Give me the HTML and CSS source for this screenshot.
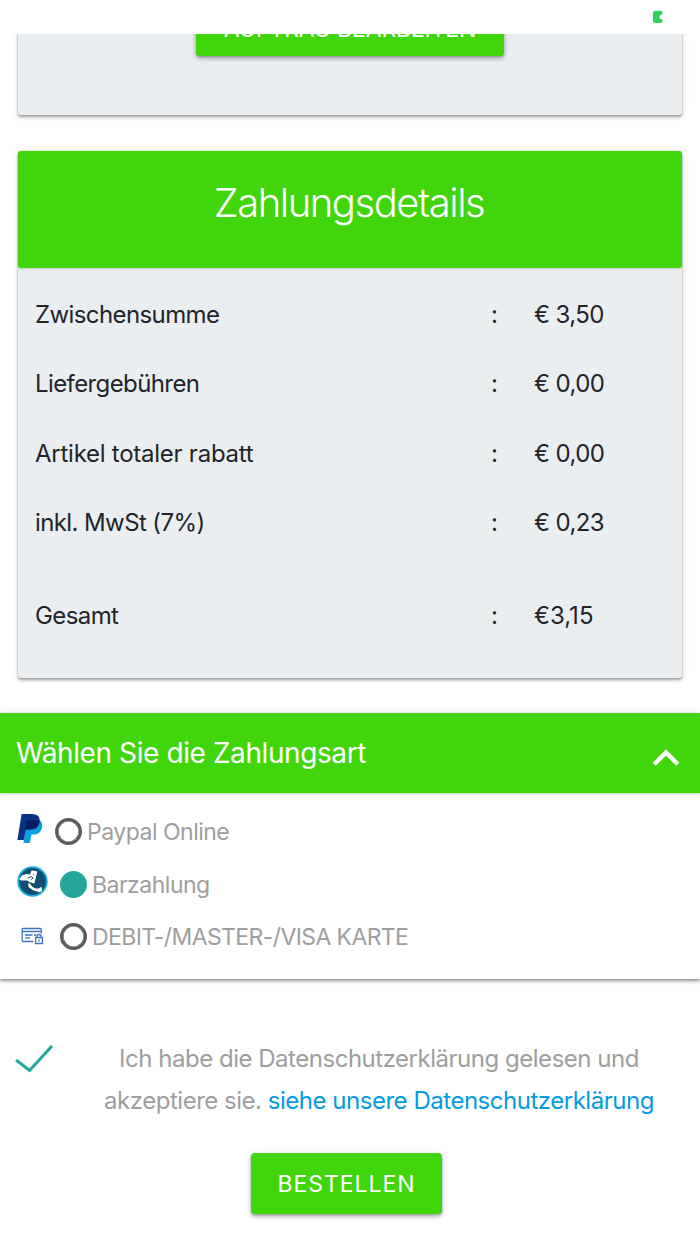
FILE: index.html
```html
<!DOCTYPE html>
<html lang="de">
<head>
<meta charset="utf-8">
<meta name="viewport" content="width=device-width, initial-scale=1">
<title>Zahlungsdetails</title>
<link rel="stylesheet" href="styles.css">
</head>
<body>
<header class="status-bar">
  <svg class="battery" width="10" height="14" viewBox="0 0 10 14"><path d="M2.5 .7H7.4Q9.5 .7 9.5 2.8V4.3Q6.4 4.9 6.4 7T9.5 9.7V10.9Q9.5 13 7.4 13H2.5Q0 13 0 10.3V3.2Q0 .7 2.5 .7Z" fill="#30d158"/></svg>
</header>
<main>
  <section class="card order-card">
    <button class="btn edit-btn"><span>AUFTRAG BEARBEITEN</span></button>
  </section>

  <section class="card details">
    <h1 class="details-title"><span>Zahlungsdetails</span></h1>
    <dl class="totals">
      <div class="row"><dt>Zwischensumme</dt><dd>:</dd><dd>€ 3,50</dd></div>
      <div class="row"><dt>Liefergebühren</dt><dd>:</dd><dd>€ 0,00</dd></div>
      <div class="row discount"><dt>Artikel totaler rabatt</dt><dd>:</dd><dd>€ 0,00</dd></div>
      <div class="row"><dt>inkl. MwSt (7%)</dt><dd>:</dd><dd>€ 0,23</dd></div>
      <div class="row total"><dt>Gesamt</dt><dd>:</dd><dd>€3,15</dd></div>
    </dl>
  </section>

  <section class="payment">
    <h2 class="payment-head"><span>Wählen Sie die Zahlungsart</span>
      <svg class="chevron" width="28" height="18" viewBox="0 0 28 18"><path d="M2.2 15.2 14 3.4l11.8 11.8" fill="none" stroke="#fff" stroke-width="4.4"/></svg>
    </h2>
    <div class="options">
      <label class="option paypal">
        <svg width="32" height="34" viewBox="0 0 32 34">
          <path d="M9 9 22 7Q26.5 9 24.8 15.5 23 21.5 16.5 21.5H14.5L12.8 30H6.5Z" fill="#0a9fe3"/>
          <path d="M4.6 1H15Q23.5 1 22.7 8.5 21.8 16.5 13 16.5H8.8L6.8 27H.4Z" fill="#063383"/>
          <path d="M9.2 8.5Q9.5 7.4 11 7.4H22.7Q22 16.5 13 16.5H7.8Z" fill="#071c60"/>
        </svg>
        <i class="radio"></i><span>Paypal Online</span>
      </label>
      <label class="option cash">
        <svg width="32" height="32" viewBox="0 0 32 32">
          <circle cx="15.5" cy="15.5" r="14.3" fill="#10506e" stroke="#18afe7" stroke-width="1.8"/>
          <path d="M2 13.2 5.2 9.2 9.4 8 13 8.6 14.6 4.2 20.4 5.4 19.2 10 17.4 17.4 12.4 16.2 10.4 14.6 4 14.6Z" fill="#fff"/>
          <path d="M10.6 12.2 14.2 10.6 16 12 14.2 13.8M16.2 8.4 17.2 9" fill="none" stroke="#10506e" stroke-width="1"/>
          <path d="M11 17.2 13 17.8 15.6 21 18.6 22.4 21.6 22.6 24.6 20.8 25 25 22.4 26.2 16 24.2 11.6 21Z" fill="#fff"/>
        </svg>
        <i class="radio checked"></i><span>Barzahlung</span>
      </label>
      <label class="option debit">
        <svg width="32" height="26" viewBox="0 0 32 26" fill="none" stroke="#3b76c3" stroke-width="1.3">
          <path d="M16.5 17.5H6.2Q5.2 17.5 5.2 16.5V5.5Q5.2 4.5 6.2 4.5H23.3Q24.3 4.5 24.3 5.5V9.4M5.2 7.5H24.3M8 11H15.5M8 13.9H13M17 11h2"/>
          <path d="M18.6 13.5H25.4V19.5H18.6ZM19.9 13.5V12.5Q19.9 10.5 22 10.5T24.1 12.5v1M22 15.5v2"/>
        </svg>
        <i class="radio"></i><span>DEBIT-/MASTER-/VISA KARTE</span>
      </label>
    </div>
  </section>

  <section class="terms">
    <svg class="tick" width="40" height="32" viewBox="0 0 40 32"><path d="M1.1 15 14.6 25.5 37 .9" fill="none" stroke="#26a69a" stroke-width="3"/></svg>
    <p>Ich habe die Datenschutzerklärung gelesen und<br>akzeptiere sie. <a>siehe unsere Datenschutzerklärung</a></p>
  </section>
  <button class="btn submit-btn"><span>BESTELLEN</span></button>
</main>
</body>
</html>
```
FILE: styles.css
```css
* { box-sizing: border-box; }
body {
  margin: 0;
  height: 1244px;
  overflow: hidden;
  background: #fff;
  color: #212529;
  font: 24px/42px Inter, sans-serif;
}
h1, h2, dl, dd, p { margin: 0; font-weight: 400; }
svg { display: block; flex: none; }
span, dt, dd, a { white-space: nowrap; }

.status-bar {
  position: relative;
  z-index: 2;
  display: flex;
  justify-content: flex-end;
  height: 34px;
  padding: 10px 37px 0 0;
  background: #fff;
}
.card {
  margin: 0 18px 36px;
  background: #ebeef1;
  border-radius: 3px;
  box-shadow: 0 3px 3px rgba(0,0,0,.18), 0 1px 2px rgba(0,0,0,.26), 0 0 8px rgba(0,0,0,.1);
}
.order-card { height: 115px; margin-top: -34px; }
.btn {
  display: flex;
  align-items: center;
  justify-content: center;
  padding: 0;
  border: 0;
  border-radius: 4px;
  background: #41d60c;
  color: #fff;
  font: 23px/60px Inter, sans-serif;
  letter-spacing: .95px;
  box-shadow: 0 3px 4px rgba(0,0,0,.24), 0 1px 2px rgba(0,0,0,.2), 0 0 8px rgba(0,0,0,.08);
}
.edit-btn { width: 308px; height: 56px; margin: 0 auto; padding-top: 1px; letter-spacing: -.15px; }

.details { height: 527px; margin-bottom: 35px; }
.details-title {
  display: flex;
  justify-content: center;
  height: 117px;
  padding: 22px 2px 0 0;
  border-radius: 3px;
  background: #41d60c;
  box-shadow: 0 1px 2px rgba(0,0,0,.16);
  color: #fff;
  font-size: 40px;
  font-weight: 300;
  line-height: 60px;
  letter-spacing: -1.45px;
}
.totals { padding: 12px 17px 0; letter-spacing: -.6px; }
.row {
  display: grid;
  grid-template-columns: 456px 43px 1fr;
  height: 69.3px;
  line-height: 69.3px;
}
.discount dt { letter-spacing: -.25px; }
.total { margin-top: 24px; }
.total dd { letter-spacing: 0; }

.payment { box-shadow: 0 3px 3px rgba(0,0,0,.2), 0 1px 2px rgba(0,0,0,.28), 0 0 8px rgba(0,0,0,.1); }
.payment-head {
  display: flex;
  justify-content: space-between;
  height: 80px;
  padding: 0 20px 0 16px;
  background: #41d60c;
  box-shadow: 0 1px 2px rgba(0,0,0,.22);
  color: #fff;
  font-size: 28px;
  line-height: 80px;
  letter-spacing: -.41px;
}
.chevron { margin-top: 36px; }
.options { height: 186px; padding: 12px 17px; color: #9e9e9e; font-size: 23px; letter-spacing: -.5px; }
.option {
  display: flex;
  align-items: center;
  height: 52.6px;
}
.radio {
  flex: none;
  width: 27px;
  height: 27px;
  margin: 0 5px 0 11px;
  border: 3px solid #5a5a5a;
  border-radius: 50%;
  box-shadow: inset 0 0 0 .6px #5a5a5a;
}
.option span { padding-top: 1px; }
.paypal .radio { margin-left: 6px; }
.checked { border-color: #26a69a; background: #26a69a; box-shadow: none; }
.paypal svg { margin-top: -3px; }
.cash svg { margin-top: -4px; }
.debit svg { margin-top: 0; }
.cash, .debit { padding-top: 1px; }
.debit span { letter-spacing: -.6px; }

.terms {
  display: flex;
  height: 84px;
  margin-top: 59px;
  color: #9e9e9e;
}
.tick { margin: 7px 0 0 15px; }
.terms p { flex: 1; padding-left: 3px; text-align: center; line-height: 42.4px; letter-spacing: -.48px; }
.terms a { color: #039be5; }
.submit-btn { width: 191px; height: 61px; margin: 31px 0 0 251px; }
```
